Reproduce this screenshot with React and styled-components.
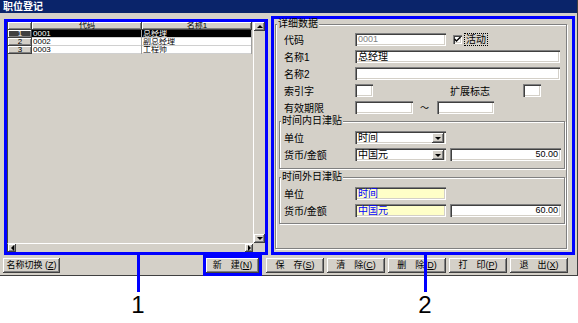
import React from "react";
import styled, { createGlobalStyle, css } from "styled-components";

const GlobalStyle = createGlobalStyle`
  html, body {
    margin: 0;
    padding: 0;
    background: #ffffff;
  }
  body {
    width: 578px;
    height: 323px;
    overflow: hidden;
    font-family: "Liberation Sans", "Noto Sans CJK SC", sans-serif;
  }
`;

//3D helpers (classic windows look)
const raised = css`
  background: #d4d0c8;
  box-shadow: inset -1px -1px #404040, inset 1px 1px #ffffff,
    inset -2px -2px #808080;
`;

const sunken = css`
  box-shadow: inset 1px 1px #808080, inset 2px 2px #404040,
    inset -1px -1px #ffffff, inset -2px -2px #d4d0c8;
`;

const Stage = styled.div`
  position: relative;
  width: 578px;
  height: 323px;
`;

const Window = styled.div`
  width: 578px;
  height: 276px;
  box-sizing: border-box;
  background: #d4d0c8;
  border-right: 1px solid #404040;
  border-bottom: 1px solid #404040;
  display: flex;
  flex-direction: column;
`;

const TitleBar = styled.div`
  height: 13px;
  background: #0a246a;
  color: #ffffff;
  font-size: 10px;
  font-weight: bold;
  line-height: 13px;
  padding-left: 3px;
`;

const Content = styled.div`
  display: flex;
  align-items: flex-start;
  padding: 3px 0 0 4px;
`;

/* ---------- left: grid ---------- */

const LeftFrame = styled.div`
  margin-top: 3px;
  width: 264px;
  height: 236px;
  box-sizing: border-box;
  border: 3px solid #0000ff;
  display: grid;
  grid-template-columns: 1fr 12px;
  grid-template-rows: 1fr 9px;
`;

const TableArea = styled.div`
  border-left: 1px solid #404040;
  display: flex;
  flex-direction: column;
  font-size: 8px;
`;

const TableRow = styled.div`
  display: grid;
  grid-template-columns: 24px 110px 110px;
  height: 8px;
  line-height: 8px;
  overflow: hidden;
`;

const HeadCell = styled.div`
  ${raised};
  text-align: center;
  overflow: hidden;
  height: 8px;
`;

const RowHead = styled.div`
  ${raised};
  text-align: center;
  height: 8px;
  overflow: hidden;
  ${({ $active }) =>
    $active &&
    css`
      background: #404040;
      color: #ffffff;
    `}
`;

const Cell = styled.div`
  padding-left: 1px;
  height: 8px;
  background: ${({ $active }) => ($active ? "#000000" : "#ffffff")};
  color: ${({ $active }) => ($active ? "#ffffff" : "#000000")};
  border-right: 1px solid #a0a0a0;
  box-shadow: inset 0 -1px #d0d0d0;
  box-sizing: border-box;
  overflow: hidden;
  white-space: nowrap;
`;

const VScroll = styled.div`
  border-left: 1px solid #ffffff;
  display: flex;
  flex-direction: column;
  justify-content: space-between;
`;

const HScroll = styled.div`
  border-left: 1px solid #404040;
  border-top: 1px solid #ffffff;
  display: flex;
  justify-content: space-between;
`;

const Corner = styled.div`
  background: #d4d0c8;
`;

const ArrowBtn = styled.div`
  ${raised};
  width: ${({ $w }) => $w}px;
  height: ${({ $h }) => $h}px;
  display: flex;
  align-items: center;
  justify-content: center;
  flex: none;
`;

const Tri = styled.span`
  width: 0;
  height: 0;
  ${({ $dir }) =>
    $dir === "up"
      ? css`
          border-left: 3px solid transparent;
          border-right: 3px solid transparent;
          border-bottom: 3px solid #000;
        `
      : $dir === "down"
      ? css`
          border-left: 3px solid transparent;
          border-right: 3px solid transparent;
          border-top: 3px solid #000;
        `
      : $dir === "left"
      ? css`
          border-top: 3px solid transparent;
          border-bottom: 3px solid transparent;
          border-right: 3px solid #000;
        `
      : css`
          border-top: 3px solid transparent;
          border-bottom: 3px solid transparent;
          border-left: 3px solid #000;
        `}
`;

/* ---------- right: details ---------- */

const RightFrame = styled.div`
  margin-left: 3px;
  width: 304px;
  height: 239px;
  box-sizing: border-box;
  border: 3px solid #0000ff;
  padding-left: 1px;
`;

const Group = styled.fieldset`
  margin: ${({ $mt }) => $mt || 0}px 0 0 0;
  padding: 0;
  width: ${({ $w }) => $w}px;
  height: ${({ $h }) => ($h ? `${$h}px` : "auto")};
  box-sizing: border-box;
  border: 1px solid #808080;
  box-shadow: inset 1px 1px #ffffff, 1px 1px #ffffff;
  min-width: 0;
`;

const Legend = styled.legend`
  font-size: 10px;
  line-height: 10px;
  padding: 0 1px;
  margin-left: 1px;
  background: #d4d0c8;
`;

const GroupBody = styled.div`
  display: flex;
  flex-direction: column;
  gap: 4px;
  padding: ${({ $pad }) => $pad};
`;

const FormRow = styled.div`
  display: flex;
  align-items: center;
  height: 13px;
  padding-left: ${({ $pl }) => $pl || 0}px;
`;

const Label = styled.div`
  width: ${({ $w }) => $w || 71}px;
  font-size: 10px;
  flex: none;
  white-space: nowrap;
  margin-left: ${({ $ml }) => $ml || 0}px;
`;

const Field = styled.div`
  ${sunken};
  width: ${({ $w }) => $w}px;
  height: 13px;
  box-sizing: border-box;
  flex: none;
  margin-left: ${({ $ml }) => $ml || 0}px;
  background: ${({ $bg }) => $bg || "#ffffff"};
  color: ${({ $color }) => $color || "#000000"};
  font-size: ${({ $fs }) => $fs || 10}px;
  line-height: 13px;
  padding: 0 3px;
  text-align: ${({ $align }) => $align || "left"};
  white-space: nowrap;
  overflow: hidden;
`;

const Select = styled(Field)`
  display: flex;
  align-items: center;
  justify-content: space-between;
  padding-right: 2px;
`;

const DropBtn = styled(ArrowBtn)`
  margin-top: 1px;
`;

const CheckBox = styled.div`
  ${sunken};
  width: 9px;
  height: 9px;
  background: #ffffff;
  margin-left: 7px;
  display: flex;
  align-items: center;
  justify-content: center;
  flex: none;
`;

const CheckLabel = styled.span`
  font-size: 10px;
  margin-left: 2px;
  border: 1px dotted #000;
  padding: 0 1px;
  line-height: 11px;
`;

const Tilde = styled.span`
  font-size: 9px;
  margin: 0 8px 0 7px;
`;

/* ---------- buttons ---------- */

const ButtonBar = styled.div`
  display: flex;
  margin-top: 3px;
  padding-left: 3px;
  gap: 3px;
`;

const Button = styled.div`
  ${raised};
  width: ${({ $w }) => $w || 58}px;
  height: 15px;
  margin-left: ${({ $ml }) => $ml || 0}px;
  margin-right: ${({ $mr }) => $mr || 0}px;
  font-size: 9px;
  line-height: 15px;
  text-align: center;
  white-space: nowrap;
  ${({ $marked }) =>
    $marked &&
    css`
      outline: 3px solid #0000ff;
      outline-offset: 0;
    `}
`;

/* ---------- callouts ---------- */

const Callout = styled.div`
  position: absolute;
  top: 255px;
  left: ${({ $x }) => $x - 10}px;
  width: 20px;
  display: flex;
  flex-direction: column;
  align-items: center;
`;

const CalloutLine = styled.div`
  width: 3px;
  height: 37px;
  background: #0000ff;
`;

const CalloutNum = styled.div`
  font-family: "Liberation Sans", sans-serif;
  font-size: 24px;
  line-height: 24px;
  margin-top: 1px;
  color: #000;
`;

const rows = [
  { no: 1, code: "0001", name: "总经理" },
  { no: 2, code: "0002", name: "副总经理" },
  { no: 3, code: "0003", name: "工程师" },
];

const buttons = [
  ["保", "存", "S"],
  ["清", "除", "C"],
  ["删", "除", "D"],
  ["打", "印", "P"],
  ["退", "出", "X"],
];

const Arrow = ({ dir, w, h }) => (
  <ArrowBtn $w={w} $h={h}>
    <Tri $dir={dir} />
  </ArrowBtn>
);

const App = () => {
  return (
    <Stage>
      <GlobalStyle />
      <Window>
        <TitleBar>职位登记</TitleBar>
        <Content>
          <LeftFrame>
            <TableArea>
              <TableRow>
                <HeadCell />
                <HeadCell>代码</HeadCell>
                <HeadCell>名称1</HeadCell>
              </TableRow>
              {rows.map((r, i) => (
                <TableRow key={r.no}>
                  <RowHead $active={i === 0}>{r.no}</RowHead>
                  <Cell $active={i === 0}>{r.code}</Cell>
                  <Cell $active={i === 0}>{r.name}</Cell>
                </TableRow>
              ))}
            </TableArea>
            <VScroll>
              <Arrow dir="up" w={11} h={9} />
              <Arrow dir="down" w={11} h={9} />
            </VScroll>
            <HScroll>
              <Arrow dir="left" w={8} h={8} />
              <Arrow dir="right" w={8} h={8} />
            </HScroll>
            <Corner />
          </LeftFrame>

          <RightFrame>
            <Group $w={292} $h={230}>
              <Legend>详细数据</Legend>
              <GroupBody $pad="4px 0 0 3px">
                <FormRow $pl={5}>
                  <Label>代码</Label>
                  <Field $w={91} $color="#808080" $fs={9}>
                    0001
                  </Field>
                  <CheckBox>
                    <svg width="7" height="7" viewBox="0 0 7 7">
                      <path
                        d="M0.5 3 L2.5 5 L6.5 1"
                        stroke="#000"
                        strokeWidth="1.4"
                        fill="none"
                      />
                    </svg>
                  </CheckBox>
                  <CheckLabel>活动</CheckLabel>
                </FormRow>
                <FormRow $pl={5}>
                  <Label>名称1</Label>
                  <Field $w={205}>总经理</Field>
                </FormRow>
                <FormRow $pl={5}>
                  <Label>名称2</Label>
                  <Field $w={205} />
                </FormRow>
                <FormRow $pl={5}>
                  <Label>索引字</Label>
                  <Field $w={18} />
                  <Label $w={73} $ml={77}>
                    扩展标志
                  </Label>
                  <Field $w={18} />
                </FormRow>
                <FormRow $pl={5}>
                  <Label>有效期限</Label>
                  <Field $w={58} />
                  <Tilde>～</Tilde>
                  <Field $w={57} />
                </FormRow>

                <Group $w={286} $mt={-2}>
                  <Legend>时间内日津贴</Legend>
                  <GroupBody $pad="5px 0 7px 4px">
                    <FormRow>
                      <Label>单位</Label>
                      <Select $w={91}>
                        时间
                        <DropBtn $w={12} $h={10}>
                          <Tri $dir="down" />
                        </DropBtn>
                      </Select>
                    </FormRow>
                    <FormRow>
                      <Label>货币/金额</Label>
                      <Select $w={91}>
                        中国元
                        <DropBtn $w={12} $h={10}>
                          <Tri $dir="down" />
                        </DropBtn>
                      </Select>
                      <Field $w={111} $ml={4} $align="right" $fs={9}>
                        50.00
                      </Field>
                    </FormRow>
                  </GroupBody>
                </Group>

                <Group $w={286} $mt={-1}>
                  <Legend>时间外日津贴</Legend>
                  <GroupBody $pad="5px 0 6px 4px">
                    <FormRow>
                      <Label>单位</Label>
                      <Field $w={91} $bg="#ffffc8" $color="#0000ff">
                        时间
                      </Field>
                    </FormRow>
                    <FormRow>
                      <Label>货币/金额</Label>
                      <Field $w={91} $bg="#ffffc8" $color="#0000ff">
                        中国元
                      </Field>
                      <Field $w={111} $ml={4} $align="right" $fs={9}>
                        60.00
                      </Field>
                    </FormRow>
                  </GroupBody>
                </Group>
              </GroupBody>
            </Group>
          </RightFrame>
        </Content>

        <ButtonBar>
          <Button $w={57}>
            名称切换 (<u>Z</u>)
          </Button>
          <Button $w={53} $ml={143} $mr={4} $marked>
            新　建(<u>N</u>)
          </Button>
          {buttons.map(([a, b, k]) => (
            <Button key={k}>
              {a}　{b}(<u>{k}</u>)
            </Button>
          ))}
        </ButtonBar>
      </Window>

      <Callout $x={138}>
        <CalloutLine />
        <CalloutNum>1</CalloutNum>
      </Callout>
      <Callout $x={425}>
        <CalloutLine />
        <CalloutNum>2</CalloutNum>
      </Callout>
    </Stage>
  );
};

export default App;
